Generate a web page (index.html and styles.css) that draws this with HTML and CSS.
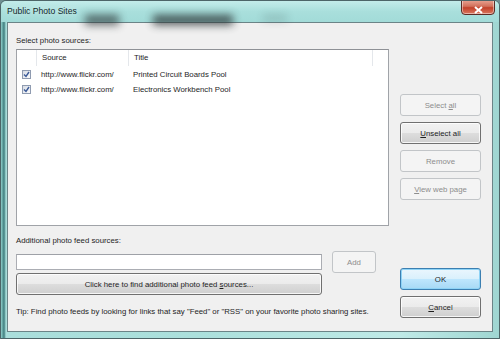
FILE: index.html
```html
<!DOCTYPE html>
<html lang="en">
<head>
    <meta charset="UTF-8">
    <title>Public Photo Sites</title>
    <link rel="stylesheet" href="styles.css">
</head>
<body>

    <div class="window">
        <div class="titlebar">
            <span class="glass-blob blob-a"></span>
            <span class="glass-blob blob-b"></span>
            <span class="glass-blob blob-c"></span>
            <span class="title">Public Photo Sites</span>
            <button class="close-btn">
                <svg width="9" height="8" viewBox="0 0 9 8"><path d="M1 1 L8 7 M8 1 L1 7" stroke="#fff" stroke-width="2"/></svg>
            </button>
        </div>

        <div class="client">
            <div class="left-col">
                <div class="label">Select photo sources:</div>

                <div class="listbox">
                    <div class="list-head">
                        <div class="col-check"></div>
                        <div class="col-source">Source</div>
                        <div class="col-title">Title</div>
                        <div class="col-fill"></div>
                    </div>
                    <div class="list-row">
                        <div class="col-check"><span class="checkbox"><svg width="7" height="7" viewBox="0 0 7 7"><path d="M1 3.5 L3 5.5 L6 1" stroke="#3b5a98" stroke-width="1.4" fill="none"/></svg></span></div>
                        <div class="col-source">http://www.flickr.com/</div>
                        <div class="col-title">Printed Circuit Boards Pool</div>
                    </div>
                    <div class="list-row">
                        <div class="col-check"><span class="checkbox"><svg width="7" height="7" viewBox="0 0 7 7"><path d="M1 3.5 L3 5.5 L6 1" stroke="#3b5a98" stroke-width="1.4" fill="none"/></svg></span></div>
                        <div class="col-source">http://www.flickr.com/</div>
                        <div class="col-title">Electronics Workbench Pool</div>
                    </div>
                </div>

                <div class="label label-gap">Additional photo feed sources:</div>
                <div class="feed-row">
                    <input type="text" class="feed-input">
                    <button class="btn disabled add-btn">Add</button>
                </div>
                <button class="btn find-btn">Click here to find additional photo feed <u>s</u>ources...</button>
                <div class="tip">Tip: Find photo feeds by looking for links that say "Feed" or "RSS" on your favorite photo sharing sites.</div>
            </div>

            <div class="right-col">
                <button class="btn disabled">Select <u>a</u>ll</button>
                <button class="btn"><u>U</u>nselect all</button>
                <button class="btn disabled">Remove</button>
                <button class="btn disabled"><u>V</u>iew web page</button>

                <div class="dialog-btns">
                    <button class="btn default">OK</button>
                    <button class="btn"><u>C</u>ancel</button>
                </div>
            </div>
        </div>
    </div>

</body>
</html>
```

FILE: styles.css
```css
body {
    margin: 0;
    font-family: "Liberation Sans", Arial, sans-serif;
    font-size: 7.8px;
    color: #1e1e1e;
    background: #6f8f92;
}

.window {
    width: 500px;
    height: 339px;
    box-sizing: border-box;
    border: 1px solid #4d6568;
    border-radius: 6px 6px 0 0;
    background: linear-gradient(90deg, #8fcfcb 0, #3f7e7e 3px, #a9dedb 5px, #abe0dc 40%, #bfeae7 80%, #9fd6d2 100%);
    overflow: hidden;
}

/* title bar */
.titlebar {
    position: relative;
    height: 21px;
    background: linear-gradient(180deg, #c3ecea 0%, #a9dfdc 50%, #a2dbd8 100%);
}
.title {
    position: relative;
    display: inline-block;
    margin: 5px 0 0 6px;
    font-size: 8.6px;
    color: #14282a;
    text-shadow: 0 0 6px #e9fbfa;
}
.glass-blob {
    position: absolute;
    background: #2c3435;
    filter: blur(4px);
    opacity: 0.7;
}
.blob-a { left: 84px; top: 14px; width: 34px; height: 10px; }
.blob-b { left: 152px; top: 14px; width: 80px; height: 10px; opacity: 0.8; }
.blob-c { left: 262px; top: 14px; width: 24px; height: 6px; opacity: 0.2; }

.close-btn {
    position: absolute;
    right: 4px;
    top: -2px;
    width: 34px;
    height: 16px;
    padding: 2px 0 0;
    border: 1px solid #5b2b25;
    border-radius: 0 0 4px 4px;
    background: linear-gradient(180deg, #e9a594 0%, #d2705b 45%, #c2412a 55%, #d9775f 100%);
    box-shadow: inset 0 0 0 1px rgba(255, 255, 255, 0.45);
}

/* dialog body */
.client {
    display: flex;
    gap: 11px;
    height: 310px;
    margin: 0 6px;
    box-sizing: border-box;
    padding: 12px 11px 13px 8px;
    background: #f0f0f0;
    border: 1px solid #6b8487;
}

.left-col {
    display: flex;
    flex-direction: column;
    width: 373px;
}
.label {
    height: 12px;
    line-height: 12px;
    margin-bottom: 2px;
}
.label-gap {
    margin-top: 9px;
}

.listbox {
    height: 180px;
    box-sizing: border-box;
    border: 1px solid #a0a3a8;
    border-top-color: #8e9196;
    background: #fff;
}
.list-head,
.list-row {
    display: flex;
    line-height: 15px;
}
.list-head {
    height: 16px;
    line-height: 16px;
    margin-bottom: 1px;
}
.list-head > div {
    border-right: 1px solid #e4e7eb;
}
.col-check {
    width: 19px;
    display: flex;
    align-items: center;
    justify-content: center;
}
.col-source {
    width: 92px;
    padding-left: 5px;
    box-sizing: border-box;
}
.col-title {
    width: 244px;
    padding-left: 5px;
    box-sizing: border-box;
}
.list-head .col-fill {
    flex: 1;
    border-right: none;
}
.checkbox {
    width: 9px;
    height: 9px;
    box-sizing: border-box;
    border: 1px solid #8f9bb0;
    background: linear-gradient(135deg, #d6dbe4, #fbfbfb);
    display: flex;
    align-items: center;
    justify-content: center;
}

.feed-row {
    display: flex;
    align-items: center;
    gap: 10px;
    margin-top: 2px;
}
.feed-input {
    width: 306px;
    height: 16px;
    box-sizing: border-box;
    margin: 0;
    border: 1px solid #abadb3;
    border-top-color: #9ea1a7;
    background: #fff;
}
.add-btn {
    width: 44px;
}
.find-btn {
    width: 306px;
    height: 16px;
    margin-top: 7px;
}
.tip {
    margin-top: 11px;
    line-height: 12px;
}

.right-col {
    display: flex;
    flex-direction: column;
    gap: 6px;
    width: 81px;
    padding-top: 59px;
}
.dialog-btns {
    margin-top: auto;
    display: flex;
    flex-direction: column;
    gap: 6px;
}

/* Windows 7 style push buttons */
.btn {
    height: 22px;
    margin: 0;
    padding: 0;
    font-family: inherit;
    font-size: 7.8px;
    color: #1e1e1e;
    border: 1px solid #707070;
    border-radius: 3px;
    background: linear-gradient(180deg, #f2f2f2 0%, #ebebeb 50%, #dddddd 51%, #cfcfcf 100%);
    box-shadow: inset 0 0 0 1px rgba(255, 255, 255, 0.8);
}
.btn.disabled {
    color: #8d8d8d;
    border-color: #c2c5c8;
    background: #f4f4f4;
    box-shadow: none;
}
.btn.default {
    border-color: #3c7fb1;
    background: linear-gradient(180deg, #eaf6fd 0%, #d9f0fc 50%, #bee6fd 51%, #a7d9f5 100%);
    box-shadow: inset 0 0 0 1px #8ed3f6;
}
u {
    text-decoration-thickness: 1px;
    text-underline-offset: 1px;
}
```
